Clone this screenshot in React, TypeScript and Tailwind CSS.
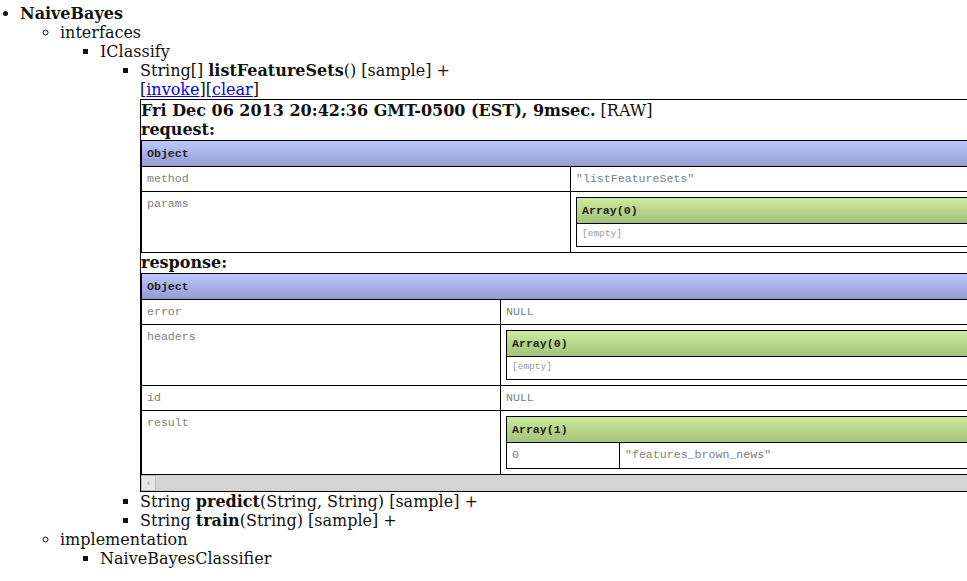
import React from 'react'

const serif = "font-['DejaVu_Serif','Liberation_Serif',serif]"
const mono = "font-['Liberation_Mono','DejaVu_Sans_Mono',monospace]"

function Header({ label, kind }: { label: string; kind: 'object' | 'array' }) {
  const bg =
    kind === 'object'
      ? 'bg-gradient-to-b from-[#bec7fc] to-[#949bd2]'
      : 'bg-gradient-to-b from-[#cdeb9b] to-[#a3c27b]'
  return (
    <div className={`${mono} h-[26px] border-b border-black px-[5px] pt-[6px] text-[11.6px] font-bold leading-[14px] text-[#222] ${bg}`}>
      {label}
    </div>
  )
}

function Cell({ children, w }: { children: React.ReactNode; w?: string }) {
  return (
    <div className={`${mono} ${w ?? 'flex-1'} whitespace-nowrap p-[5px] text-[11.6px] leading-[14px] text-[#808080] ${w ? 'border-r border-black' : ''}`}>
      {children}
    </div>
  )
}

function Row({ k, w, children, last }: { k: string; w: string; children: React.ReactNode; last?: boolean }) {
  return (
    <div className={`flex ${last ? '' : 'border-b border-black'}`}>
      <Cell w={w}>{k}</Cell>
      <div className={`${mono} flex-1 whitespace-nowrap p-[5px] text-[11.6px] leading-[14px] text-[#808080]`}>{children}</div>
    </div>
  )
}

function EmptyArray() {
  return (
    <div className="border border-black">
      <Header label="Array(0)" kind="array" />
      <div className={`${mono} h-[22px] px-[5px] pt-[4px] text-[9.5px] leading-[12px] text-[#999]`}>[empty]</div>
    </div>
  )
}

function Payload() {
  return (
    <div className="w-[900px] border-y border-l border-black pt-[1px]">
      <div className="leading-[19px]">
        <b>Fri Dec 06 2013 20:42:36 GMT-0500 (EST), 9msec.</b> [RAW]
      </div>
      <div className="leading-[20px] font-bold">request:</div>
      <div className="border border-black">
        <Header label="Object" kind="object" />
        <Row k="method" w="w-[429px]">
          "listFeatureSets"
        </Row>
        <Row k="params" w="w-[429px]" last>
          <EmptyArray />
        </Row>
      </div>
      <div className="leading-[20px] font-bold">response:</div>
      <div className="border border-black">
        <Header label="Object" kind="object" />
        <Row k="error" w="w-[359px]">
          NULL
        </Row>
        <Row k="headers" w="w-[359px]">
          <EmptyArray />
        </Row>
        <Row k="id" w="w-[359px]">
          NULL
        </Row>
        <Row k="result" w="w-[359px]" last>
          <div className="border border-black">
            <Header label="Array(1)" kind="array" />
            <div className="flex h-[25px]">
              <Cell w="w-[113px]">0</Cell>
              <Cell>"features_brown_news"</Cell>
            </div>
          </div>
        </Row>
      </div>
      <div className="flex h-[16px] bg-[#d4d4d4]">
        <div className="flex w-[15px] items-center justify-center border border-[#bdbdbd] bg-[#e6e6e6] text-[10px] leading-none text-[#999]">
          ‹
        </div>
      </div>
    </div>
  )
}

export default function App() {
  return (
    <div className={`${serif} h-[581px] w-[967px] overflow-hidden bg-white pt-[4px] text-[16px] leading-[19px] text-[#111]`}>
      <ul className="list-disc pl-[20px]">
        <li>
          <b>NaiveBayes</b>
          <ul className="list-[circle] pl-[40px]">
            <li>
              interfaces
              <ul className="list-[square] pl-[40px]">
                <li>
                  IClassify
                  <ul className="list-[square] pl-[40px]">
                    <li>
                      String[] <b>listFeatureSets</b>() [sample] +
                      <div>
                        [<a className="text-[#0000ee] underline">invoke</a>][<a className="text-[#0000ee] underline">clear</a>]
                      </div>
                      <Payload />
                    </li>
                    <li>
                      String <b>predict</b>(String, String) [sample] +
                    </li>
                    <li>
                      String <b>train</b>(String) [sample] +
                    </li>
                  </ul>
                </li>
              </ul>
            </li>
            <li>
              implementation
              <ul className="list-[square] pl-[40px]">
                <li>NaiveBayesClassifier</li>
              </ul>
            </li>
          </ul>
        </li>
      </ul>
    </div>
  )
}
